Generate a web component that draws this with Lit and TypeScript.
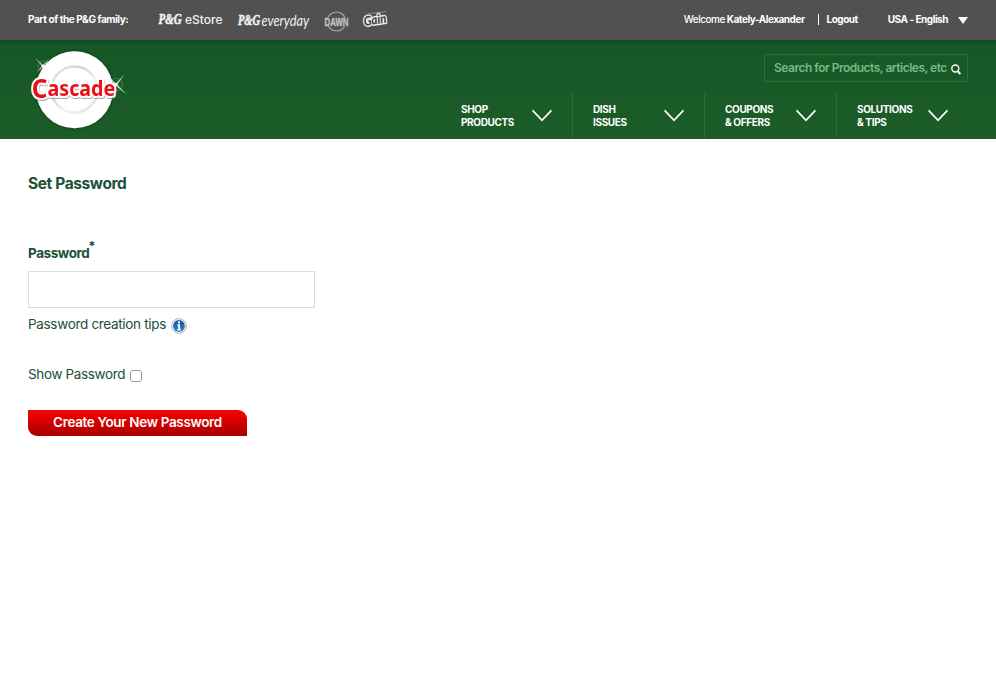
import { LitElement, html, css, svg } from "lit";
import { customElement } from "lit/decorators.js";

const NAV = [
  ["SHOP", "PRODUCTS"],
  ["DISH", "ISSUES"],
  ["COUPONS", "& OFFERS"],
  ["SOLUTIONS", "& TIPS"],
];

@customElement("family-bar")
class FamilyBar extends LitElement {
  static styles = css`
    :host { display: flex; height: 40px; box-sizing: border-box; padding: 0 28px; background: #515151; color: #fff;
      font: 700 10px/39px Inter, sans-serif; white-space: nowrap; }
    .lead { width: 130px; letter-spacing: -0.4px; }
    .logos { display: block; width: 240px; height: 40px; }
    .right { margin-left: auto; height: 39px; display: flex; align-items: center; letter-spacing: -0.48px; }
    .plain { font-weight: 500; }
    .logout { border-left: 1px solid #fff; line-height: 11px; padding-left: 8px; margin: 0 30px 0 13px; }
    .arrow { width: 10px; height: 7px; margin: 1px 0 0 10px; }
  `;
  render() {
    return html`
      <span class="lead">Part of the P&amp;G family:</span>
      <svg class="logos" viewBox="158 0 240 40" fill="#f2f2f2">
        <g font-family="Liberation Serif, serif" font-weight="700" font-style="italic" font-size="14" stroke="#f2f2f2" stroke-width=".6">
          <text x="158.500" y="23.800" textLength="23" lengthAdjust="spacingAndGlyphs">P&amp;G</text>
          <text x="238" y="25.300" textLength="22" lengthAdjust="spacingAndGlyphs">P&amp;G</text>
        </g>
        <text x="185" y="24" font-family="Inter, sans-serif" font-weight="500" font-size="11.500" textLength="37.500" lengthAdjust="spacingAndGlyphs">eStore</text>
        <text x="261.500" y="25.800" font-family="Lato, sans-serif" font-style="italic" font-weight="400" font-size="14.500" textLength="47.500" lengthAdjust="spacingAndGlyphs">everyday</text>
        <circle cx="336.500" cy="21.500" r="9.500" fill="none" stroke="#a5a5a5" stroke-width="1.200" />
        <path d="M324 17.500h25v8.500h-25z" fill="#515151" />
        <text x="324.500" y="25.800" fill="#c4c4c4" stroke="#c4c4c4" stroke-width=".3" font-family="Liberation Sans, sans-serif" font-weight="700" font-size="10" textLength="24" lengthAdjust="spacingAndGlyphs">DAWN</text>
        <path d="M368 13.800L386 11.600" stroke="#8a8a8a" stroke-width="1" />
        <text transform="rotate(-9 375 20)" x="363.800" y="24.300" font-family="Lato, sans-serif" font-weight="900" font-style="italic" font-size="13" textLength="22.500" lengthAdjust="spacingAndGlyphs"
          fill="#444" stroke="#eee" stroke-width="2.800" stroke-linejoin="round" paint-order="stroke">Gain</text>
      </svg>
      <div class="right">
        <span><span class="plain">Welcome</span> Kately-Alexander</span>
        <span class="logout">Logout</span>
        <span>USA - English</span>
        <svg class="arrow" viewBox="0 0 10 7"><path d="M0 0h10L5 7z" fill="#fff" /></svg>
      </div>
    `;
  }
}

@customElement("site-header")
class SiteHeader extends LitElement {
  static styles = css`
    :host { display: flex; justify-content: space-between; height: 99px; padding: 0 28px; box-sizing: border-box;
      background: linear-gradient(#114a22 0, #155826 6px, #1d5c29 100%); font-family: Inter, sans-serif; }
    .logo { width: 104px; height: 99px; flex: none; }
    .side { display: flex; flex-direction: column; align-items: flex-end; width: 528px; padding-top: 14px; }
    .search { box-sizing: border-box; width: 204px; height: 28px; border: 1px solid #2c7032; display: flex; align-items: center;
      padding: 0 6px 1px 9px; justify-content: space-between; font-size: 12px; font-weight: 600; color: #78b985; white-space: nowrap; letter-spacing: -0.5px; }
    .glass { width: 10px; height: 11px; flex: none; margin-top: 3px; }
    .nav { display: flex; margin-top: 12px; }
    .item { box-sizing: border-box; width: 132px; height: 44px; padding: 9px 20px 0; display: flex; justify-content: space-between;
      border-left: 1px solid #2c7032; color: #fff; font: 700 10px/13px Inter, sans-serif; letter-spacing: -0.36px; white-space: nowrap; }
    .item.first { border-left-color: transparent; }
    .chev { width: 20px; height: 13px; margin-top: 6px; flex: none; }
  `;
  render() {
    const sparkle = (x: number, y: number, r: number) => svg`
      <circle cx=${x} cy=${y} r=${r * 0.6} fill="none" stroke="#fff" stroke-opacity=".2" />
      <path transform="translate(${x} ${y}) scale(${r})" fill="#fff" fill-opacity=".75"
        d="M-1-1L0-.12L.8-.95L.13 0L1 .95L0 .14L-.8 .8L-.13 0Z" />
      <circle cx=${x} cy=${y} r="1.600" fill="#fff" />`;
    return html`
      <svg class="logo" viewBox="28 40 104 99">
        <defs>
          <linearGradient id="rim" x2="1" y2="1"><stop stop-color="#eee" /><stop offset=".35" stop-color="#d0d3d3" /><stop offset=".6" stop-color="#f4f4f4" /><stop offset="1" stop-color="#dde0e0" /></linearGradient>
          <filter id="shade" x="-20%" y="-20%" width="140%" height="140%"><feDropShadow dx="0" dy="0" stdDeviation="1.500" flood-color="#062c10" flood-opacity=".9" /></filter>
          <filter id="lift" x="-10%" y="-20%" width="120%" height="150%"><feDropShadow dx=".5" dy="1" stdDeviation=".4" flood-color="#777" flood-opacity=".7" /></filter>
        </defs>
        <circle cx="74.500" cy="89.700" r="38.500" fill="#fff" filter="url(#shade)" />
        <circle cx="74.500" cy="89.500" r="23" fill="none" stroke="url(#rim)" stroke-width="2.600" />
        ${sparkle(43, 66, 8)} ${sparkle(116, 84.500, 10.500)}
        <text x="31.800" y="96" font-family="Noto Sans, sans-serif" font-weight="700" font-size="21" textLength="83.500" lengthAdjust="spacingAndGlyphs"
          fill="#ed1118" stroke="#fff" stroke-width="4" stroke-linejoin="round" paint-order="stroke" filter="url(#lift)"><tspan font-size="26" dy="1.500">C</tspan><tspan dy="-1.500">ascade</tspan></text>
      </svg>
      <div class="side">
        <div class="search">
          <span>Search for Products, articles, etc</span>
          <svg class="glass" viewBox="0 0 10 11" fill="none" stroke="#fff"><circle cx="4.300" cy="4.500" r="3.500" stroke-width="1.400" /><path d="M6.800 7.200L9.400 10" stroke-width="2" /></svg>
        </div>
        <div class="nav">
          ${NAV.map(([a, b], i) => html`
            <div class="item ${i === 0 ? "first" : ""}"><span>${a}<br />${b}</span>
              <svg class="chev" viewBox="0 0 20 13" fill="none" stroke="#fff" stroke-width="1.700"><path d="M.6 1.300L10 11.300L19.400 1.300" /></svg>
            </div>`)}
        </div>
      </div>
    `;
  }
}

@customElement("password-form")
class PasswordForm extends LitElement {
  static styles = css`
    :host { display: flex; flex-direction: column; align-items: flex-start; padding: 35px 28px; color: #214f35;
      font: 400 13.5px/20px Inter, sans-serif; letter-spacing: -0.32px; white-space: nowrap; }
    .title { margin: 0; font-size: 15.5px; line-height: 20px; letter-spacing: -0.39px; font-weight: 700; }
    .label { display: flex; margin-top: 49px; font-weight: 700; font-size: 13.5px; letter-spacing: -0.44px; }
    .star { font-size: 13px; line-height: 10px; margin: -2px 0 0 -1px; }
    .field { box-sizing: border-box; width: 287px; height: 37px; margin: 8px 0 6px; padding: 0 8px; border: 1px solid #d9dedd; background: #fff; outline: 0; border-radius: 0; }
    .row { display: flex; align-items: center; height: 20px; }
    .info { width: 16px; height: 16px; margin: 3px 0 0 5px; }
    .show { margin-top: 30px; letter-spacing: -0.36px; }
    .box { appearance: none; box-sizing: border-box; width: 12px; height: 12px; margin: 3px 0 0 5px; border: 1px solid #999; border-radius: 3px; background: #fff; }
    .submit { width: 219px; height: 26px; margin: 26px 0 0; padding: 0 0 2px; border: 0; border-radius: 0 9px 0 9px; color: #fff;
      background: linear-gradient(#fc0000, #a80000); font: 600 13.5px/24px Inter, sans-serif; letter-spacing: -0.35px; }
  `;
  render() {
    return html`
      <h1 class="title">Set Password</h1>
      <label class="label" for="pw">Password<span class="star">*</span></label>
      <input class="field" id="pw" type="password" />
      <div class="row"><span>Password creation tips</span>
        <svg class="info" viewBox="0 0 16 16">
          <defs><linearGradient id="blue" x2="0" y2="1"><stop stop-color="#124f9c" /><stop offset="1" stop-color="#2c86d8" /></linearGradient></defs>
          <circle cx="8" cy="8" r="7.300" fill="#fff" stroke="#aaa" stroke-width="1" />
          <circle cx="8" cy="8" r="5.900" fill="url(#blue)" />
          <path d="M7 3.200h2v2H7zM6.200 6.200H9v5h1v1.200H6.100v-1.200h1V7.400h-.9z" fill="#fff" />
        </svg>
      </div>
      <label class="row show"><span>Show Password</span><input class="box" type="checkbox" /></label>
      <button class="submit">Create Your New Password</button>
    `;
  }
}

@customElement("app-root")
class AppRoot extends LitElement {
  static styles = css`:host { display: block; min-height: 674px; background: #fff; }`;
  render() {
    return html`<family-bar></family-bar><site-header></site-header><password-form></password-form>`;
  }
}
